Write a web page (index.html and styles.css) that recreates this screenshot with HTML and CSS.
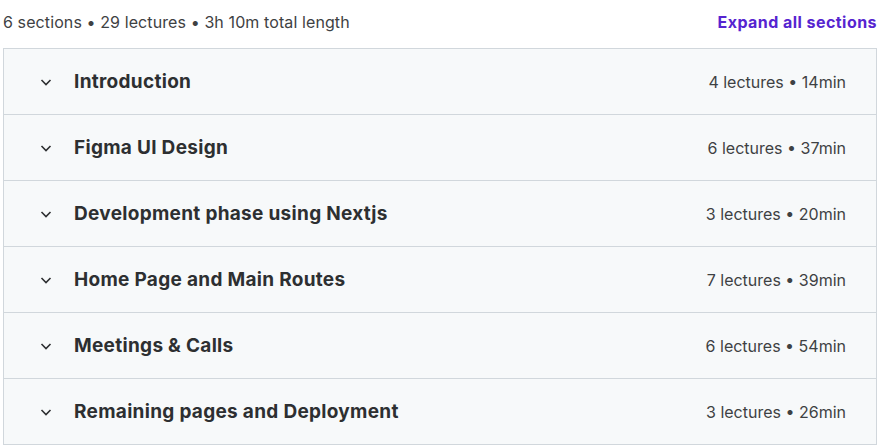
FILE: index.html
```html
<!DOCTYPE html>
<html lang="en">
<head>
  <meta charset="UTF-8">
  <title>Course content</title>
  <link rel="stylesheet" href="styles.css">
</head>
<body>
  <div class="curriculum">
    <div class="curriculum__header">
      <span class="curriculum__summary">6 sections • 29 lectures • 3h 10m total length</span>
      <button class="curriculum__expand">Expand all sections</button>
    </div>
    <div class="sections">
      <div class="section">
        <svg class="section__chevron" viewBox="0 0 12 12"><path d="M1.5 4l4.5 4.5 4.5-4.5"/></svg>
        <span class="section__title">Introduction</span>
        <span class="section__meta">4 lectures • 14min</span>
      </div>
      <div class="section">
        <svg class="section__chevron" viewBox="0 0 12 12"><path d="M1.5 4l4.5 4.5 4.5-4.5"/></svg>
        <span class="section__title">Figma UI Design</span>
        <span class="section__meta">6 lectures • 37min</span>
      </div>
      <div class="section">
        <svg class="section__chevron" viewBox="0 0 12 12"><path d="M1.5 4l4.5 4.5 4.5-4.5"/></svg>
        <span class="section__title">Development phase using Nextjs</span>
        <span class="section__meta">3 lectures • 20min</span>
      </div>
      <div class="section">
        <svg class="section__chevron" viewBox="0 0 12 12"><path d="M1.5 4l4.5 4.5 4.5-4.5"/></svg>
        <span class="section__title">Home Page and Main Routes</span>
        <span class="section__meta">7 lectures • 39min</span>
      </div>
      <div class="section">
        <svg class="section__chevron" viewBox="0 0 12 12"><path d="M1.5 4l4.5 4.5 4.5-4.5"/></svg>
        <span class="section__title">Meetings &amp; Calls</span>
        <span class="section__meta">6 lectures • 54min</span>
      </div>
      <div class="section">
        <svg class="section__chevron" viewBox="0 0 12 12"><path d="M1.5 4l4.5 4.5 4.5-4.5"/></svg>
        <span class="section__title">Remaining pages and Deployment</span>
        <span class="section__meta">3 lectures • 26min</span>
      </div>
    </div>
  </div>
</body>
</html>
```

FILE: styles.css
```css
html {
  box-sizing: border-box;
  background: #fff;
}

*, *:before, *:after {
  box-sizing: inherit;
}

body {
  margin: 0;
  font-family: Inter, "Liberation Sans", sans-serif;
  color: #2d2f31;
}

.curriculum {
  padding: 0 4px 0 3px;
}

.curriculum__header {
  display: flex;
  align-items: center;
  justify-content: space-between;
  height: 48px;
  padding-bottom: 5px;
}

.curriculum__summary {
  font-size: 16px;
  letter-spacing: 0.1px;
  color: #3e4143;
}

.curriculum__expand {
  background: none;
  border: 0;
  padding: 0;
  cursor: pointer;
  font-family: inherit;
  font-size: 16px;
  font-weight: 700;
  letter-spacing: 0.45px;
  color: #5624d0;
}

.sections {
  border: 1px solid #d1d7dc;
  border-bottom: 0;
}

.section {
  display: flex;
  align-items: center;
  height: 66px;
  padding: 0 30px 0 36px;
  background: #f7f9fa;
  border-bottom: 1px solid #d1d7dc;
}

.section__chevron {
  width: 12px;
  height: 12px;
  fill: none;
  stroke: #2d2f31;
  stroke-width: 1.6;
  margin-right: 22px;
}

.section__title {
  flex: 1;
  font-size: 19px;
  font-weight: 700;
  letter-spacing: 0.3px;
  color: #2d2f31;
}

.section__meta {
  font-size: 16px;
  color: #3e4143;
}
```
